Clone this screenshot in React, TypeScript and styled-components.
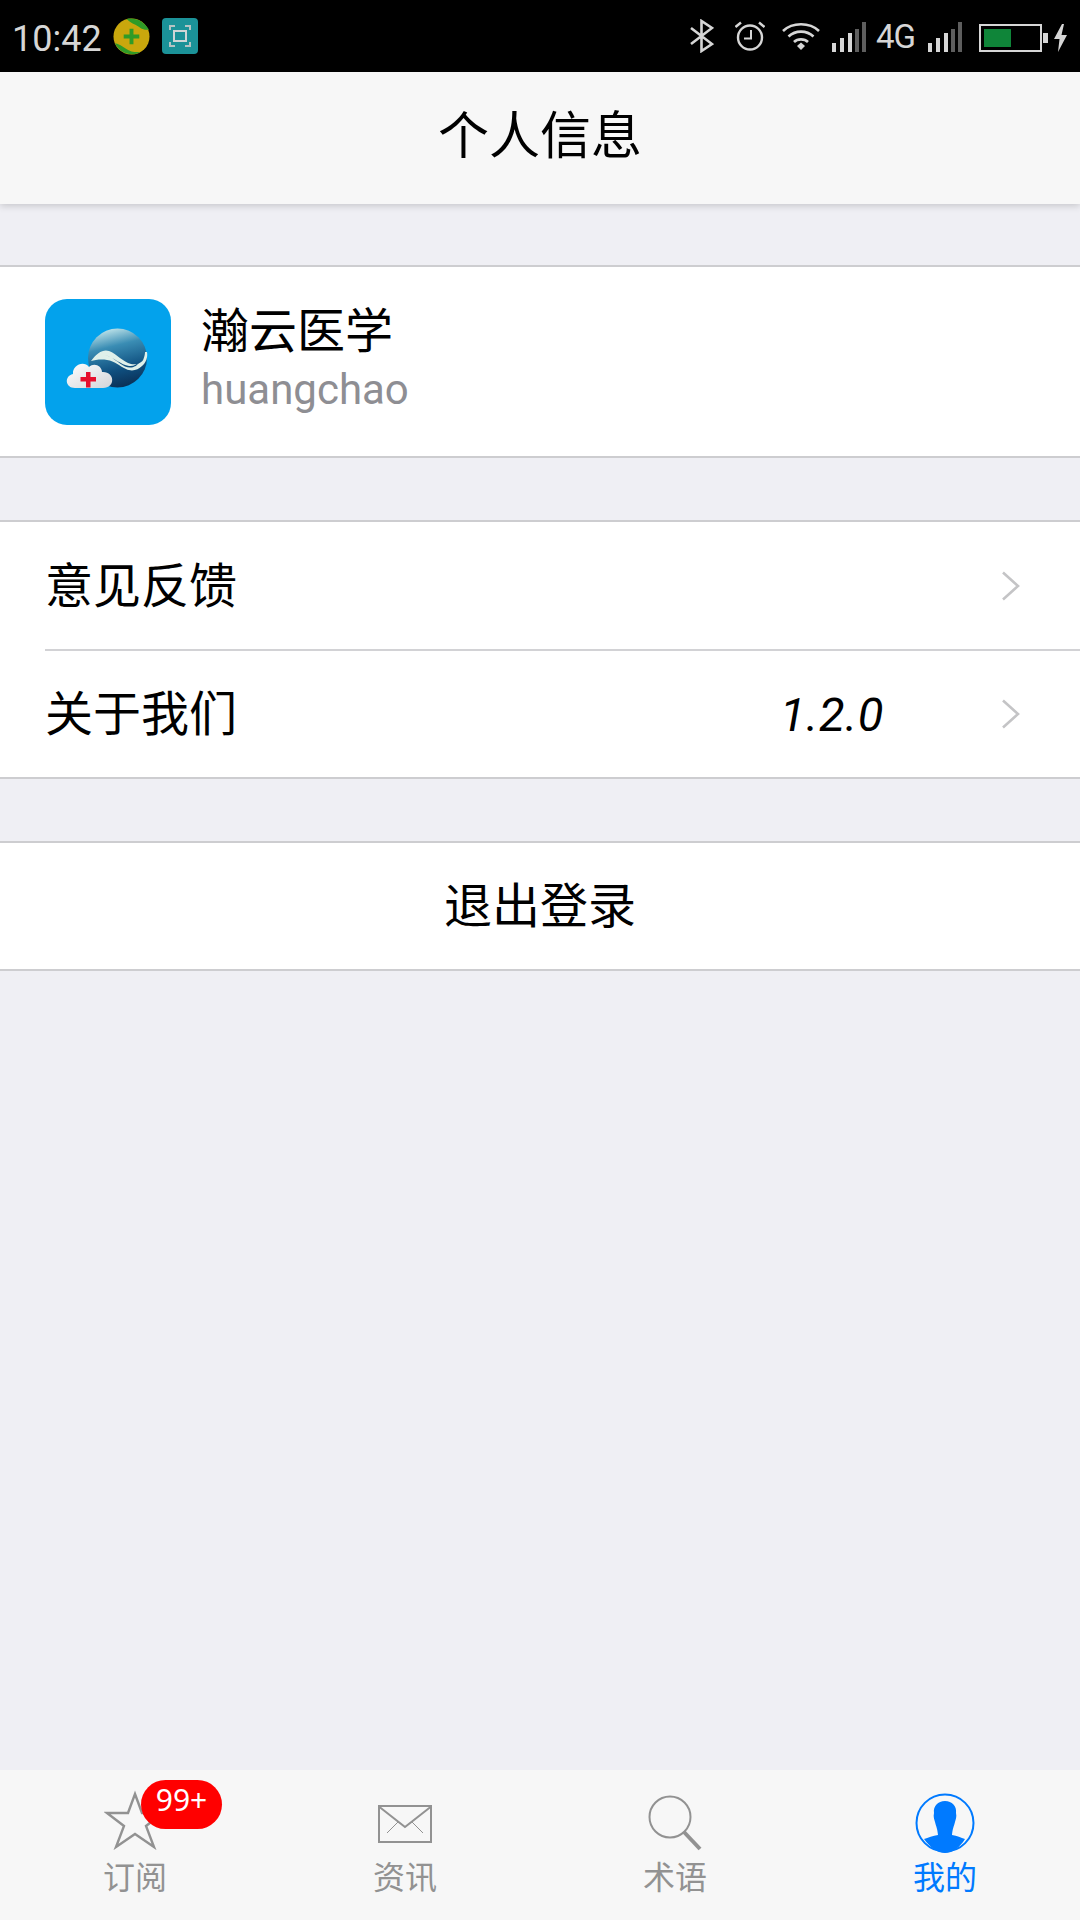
import React from 'react';
import styled, { createGlobalStyle } from 'styled-components';

const GlobalStyle = createGlobalStyle`
    html, body {
        margin: 0;
        padding: 0;
        background: #efeff4;
        font-family: Roboto, "Noto Sans CJK SC", sans-serif;
    }
    * {
        box-sizing: border-box;
    }
`;

const Page = styled.div`
    width: 1080px;
    height: 1920px;
    display: flex;
    flex-direction: column;
    background: #efeff4;
    overflow: hidden;
`;

const StatusBar = styled.div`
    height: 72px;
    flex: none;
    background: #000;
    display: flex;
    align-items: center;
    justify-content: space-between;
    padding: 0 13px 0 12px;
    color: #d6d6d6;
`;

const StatusGroup = styled.div`
    display: flex;
    align-items: center;
`;

const StatusItem = styled.div<{ $gap: number; $down?: number }>`
    display: flex;
    margin-left: ${(p) => p.$gap}px;
    padding-top: ${(p) => p.$down ?? 0}px;
`;

const Clock = styled.span`
    font-size: 36px;
    line-height: 72px;
    margin-right: 11px;
    position: relative;
    top: 3px;
`;

const NetworkLabel = styled.span`
    font-size: 33px;
    line-height: 36px;
    letter-spacing: -1px;
`;

const Header = styled.header`
    height: 132px;
    flex: none;
    background: #f7f7f7;
    display: flex;
    align-items: center;
    justify-content: center;
    padding-bottom: 13px;
    box-shadow: 0 2px 7px rgba(0, 0, 0, 0.17);
    position: relative;
    font-size: 51px;
    color: #000;
`;

const Content = styled.main`
    flex: 1;
    display: flex;
    flex-direction: column;
    padding-top: 61px;
    gap: 62px;
`;

const Section = styled.section`
    background: #fff;
    border-top: 2px solid #cdcdd0;
    border-bottom: 2px solid #cdcdd0;
`;

const Profile = styled.div`
    height: 189px;
    display: flex;
    align-items: center;
    padding-left: 45px;
    gap: 30px;
`;

const Logo = styled.div`
    width: 126px;
    height: 126px;
    border-radius: 22px;
    background: #03a2ec;
    flex: none;
`;

const ProfileText = styled.div`
    display: flex;
    flex-direction: column;
`;

const Name = styled.div`
    font-size: 48px;
    line-height: 60px;
    margin-top: -6px;
    color: #000;
`;

const Account = styled.div`
    font-size: 42px;
    line-height: 50px;
    margin-top: 3px;
    color: #8e8e93;
`;

const Row = styled.div<{ $divider?: boolean }>`
    height: ${(p) => (p.$divider ? 129 : 126)}px;
    margin-left: 45px;
    padding-right: 59px;
    display: flex;
    align-items: center;
    border-bottom: ${(p) => (p.$divider ? '2px solid #d2d2d5' : 'none')};
    font-size: 48px;
    color: #000;
`;

const RowLabel = styled.span`
    flex: 1;
    padding-bottom: 8px;
`;

const RowValue = styled.span`
    font-size: 47px;
    font-style: italic;
    letter-spacing: 0.6px;
    margin-right: 117px;
`;

const Logout = styled.div`
    height: 126px;
    display: flex;
    align-items: center;
    justify-content: center;
    padding-bottom: 9px;
    font-size: 48px;
    color: #000;
`;

const TabBar = styled.nav`
    height: 150px;
    flex: none;
    background: #f7f7f7;
    display: grid;
    grid-template-columns: repeat(4, 270px);
`;

const Tab = styled.div<{ $active?: boolean }>`
    display: flex;
    flex-direction: column;
    align-items: center;
    padding-top: 20px;
    color: ${(p) => (p.$active ? '#007aff' : '#929292')};
    font-size: 32px;
    line-height: 40px;
`;

const TabIcon = styled.div<{ $top: number }>`
    width: 64px;
    height: 60px;
    margin-bottom: 8px;
    padding-top: ${(p) => p.$top}px;
    position: relative;
    display: flex;
    justify-content: center;
`;

const Badge = styled.span`
    position: absolute;
    left: 38px;
    top: -10px;
    width: 81px;
    height: 49px;
    border-radius: 25px;
    background: #ff0000;
    color: #fff;
    font-size: 30px;
    line-height: 40px;
    text-align: center;
    font-family: "Noto Sans", sans-serif;
`;

const Chevron = () => (
    <svg width="20" height="30" viewBox="0 0 20 30" fill="none">
        <path d="M2 1.5 L17 15 L2 28.5" stroke="#c4c4c6" strokeWidth="2.6" />
    </svg>
);

const AppLogo = () => (
    <svg width="126" height="126" viewBox="0 0 126 126">
        <defs>
            <linearGradient id="globe" x1="0.35" y1="0" x2="0.6" y2="1">
                <stop offset="0" stopColor="#bfe4ea" />
                <stop offset="0.3" stopColor="#3a8db4" />
                <stop offset="0.7" stopColor="#0f4f7f" />
                <stop offset="1" stopColor="#0a2f55" />
            </linearGradient>
            <linearGradient id="cloud" x1="0" y1="0" x2="1" y2="1">
                <stop offset="0" stopColor="#ffffff" />
                <stop offset="1" stopColor="#d2d4d8" />
            </linearGradient>
        </defs>
        <circle cx="72.5" cy="59" r="29.5" fill="url(#globe)" />
        <path d="M46 62 C52 54 58 50 64 52 C72 55 78 63 86 65 C92 66 97 64 98.500 60 C99.500 57 100 55 100 53 L102 53 C103 58 101 64 97 67 C93 71 87 73 81 70 C74 67 70 62 62 61 C56 60 50 61 46 62 Z" fill="#dff0ea" />
        <path d="M60 56 C68 58 76 66 84 67 C88 67.500 92 66 95 62 C92 68 86 70 80 67.500 C73 64 68 58 60 56 Z" fill="#0f4f7f" />
        <path d="M30 89 C20 89 19 77 28 75 C27 66 39 61 44 68 C49 63 57 67 57 73 C70 72 71 89 58 89 Z" fill="url(#cloud)" />
        <path d="M41 73 h4.500 v5 h5.500 v4.500 h-5.500 v6 h-4.500 v-6 h-5.500 v-4.500 h5.500 Z" fill="#e60f2d" />
    </svg>
);

const StarIcon = () => (
    <svg width="62" height="60" viewBox="0 0 62 60" fill="none">
        <path d="M31 4 L38 23 L59 23 L42 36 L50 57 L31 44 L12 57 L20 36 L3 23 L24 23 Z" stroke="#929292" strokeWidth="2.4" />
    </svg>
);

const MailIcon = () => (
    <svg width="54" height="38" viewBox="0 0 54 38" fill="none">
        <rect x="1" y="1" width="52" height="36" stroke="#929292" strokeWidth="2" />
        <path d="M1.5 2 L27 22 L52.5 2" stroke="#929292" strokeWidth="2" />
        <path d="M20 17 L9 28 M34 17 L45 28" stroke="#929292" strokeWidth="1" />
    </svg>
);

const SearchIcon = () => (
    <svg width="54" height="56" viewBox="0 0 54 56" fill="none">
        <circle cx="22" cy="22" r="20.500" stroke="#929292" strokeWidth="2" />
        <path d="M36 37 L52 54" stroke="#929292" strokeWidth="4" />
    </svg>
);

const ProfileIcon = () => (
    <svg width="60" height="60" viewBox="0 0 60 60" fill="none">
        <circle cx="30" cy="30" r="28.500" stroke="#007aff" strokeWidth="2" />
        <path d="M30 8 C37 8 42 13 41 20 C42 24 40.500 27 40 29 C39 33 37.500 36 37 42 C42 43 46 44.500 50 46 C45 54 38 60 30 60 C22 60 15 54 9 46 C13 44.500 18 43 23 42 C22.500 36 21 33 20 29 C19.500 27 18 24 19 20 C18 13 23 8 30 8 Z" fill="#007aff" />
    </svg>
);

const GlobeBadge = () => (
    <svg width="37" height="37" viewBox="0 0 38 38">
        <circle cx="19" cy="19" r="18.500" fill="#c9a70d" />
        <path d="M14 1 C22 -1 32 3 37 12 C30 13 27 9 23 7 C19 5 16 3 14 1 Z M2 26 C8 27 11 31 16 33 C20 35 24 35 28 35 C20 40 7 37 2 26 Z" fill="#2f9b27" />
        <path d="M19 11 V27 M11 19 H27" stroke="#2f9b27" strokeWidth="4" />
    </svg>
);

const ScanBadge = () => (
    <svg width="36" height="36" viewBox="0 0 36 36" fill="none">
        <rect width="36" height="36" rx="4" fill="#1b9298" />
        <rect x="12" y="13" width="12" height="10" stroke="#cfd6d6" strokeWidth="2" />
        <path d="M8 12 V8 H13 M23 8 H28 V12 M28 24 V28 H23 M13 28 H8 V24" stroke="#b5c4c4" strokeWidth="2" />
    </svg>
);

const Bluetooth = () => (
    <svg width="24" height="34" viewBox="0 0 24 34" fill="none">
        <path d="M1 9 L22 25 L11.500 32 V2 L22 9 L1 25" stroke="#d6d6d6" strokeWidth="2.600" />
    </svg>
);

const Alarm = () => (
    <svg width="30" height="30" viewBox="0 0 30 30" fill="none">
        <circle cx="15" cy="16.500" r="12" stroke="#d6d6d6" strokeWidth="2.400" />
        <path d="M16 9 V17.500 H9" stroke="#d6d6d6" strokeWidth="2" />
        <path d="M0.500 6 L6 1.500 M29.500 6 L24 1.500" stroke="#d6d6d6" strokeWidth="2.400" />
    </svg>
);

const Wifi = () => (
    <svg width="38" height="28" viewBox="0 0 38 28" fill="none">
        <path d="M1 9 C10.500 0 27.500 0 37 9 M6.500 14.500 C13.500 8 24.500 8 31.500 14.500 M12 20 C15.500 16.500 22.500 16.500 26 20" stroke="#d6d6d6" strokeWidth="2.600" />
        <path d="M15 24 L19 20.500 L23 24 L19 28 Z" fill="#d6d6d6" />
    </svg>
);

const Signal = () => (
    <svg width="34" height="30" viewBox="0 0 34 30" fill="#d6d6d6">
        <rect x="0" y="21" width="4" height="9" />
        <rect x="8" y="16" width="4" height="14" />
        <rect x="16" y="11" width="4" height="19" />
        <rect x="23" y="7" width="4" height="23" fill="#5e5e5e" />
        <rect x="30" y="0" width="4" height="30" fill="#5e5e5e" />
    </svg>
);

const Battery = () => (
    <svg width="88" height="28" viewBox="0 0 88 28" fill="none">
        <rect x="1" y="1" width="61" height="26" stroke="#d6d6d6" strokeWidth="2" />
        <rect x="5" y="5" width="27" height="18" fill="#0f8539" />
        <rect x="64" y="9" width="5" height="10" fill="#d6d6d6" />
        <path d="M83 0 L75 15 H80.500 L79 28 L88 11 H82.500 L85 0 Z" fill="#d6d6d6" />
    </svg>
);

const App: React.FC = () => {
    return (
        <Page>
            <GlobalStyle />
            <StatusBar>
                <StatusGroup>
                    <Clock>10:42</Clock>
                    <GlobeBadge />
                    <StatusItem $gap={12}>
                        <ScanBadge />
                    </StatusItem>
                </StatusGroup>
                <StatusGroup>
                    <Bluetooth />
                    <StatusItem $gap={21}>
                        <Alarm />
                    </StatusItem>
                    <StatusItem $gap={17}>
                        <Wifi />
                    </StatusItem>
                    <StatusItem $gap={12} $down={2}>
                        <Signal />
                    </StatusItem>
                    <StatusItem $gap={10} $down={2}>
                        <NetworkLabel>4G</NetworkLabel>
                    </StatusItem>
                    <StatusItem $gap={13} $down={2}>
                        <Signal />
                    </StatusItem>
                    <StatusItem $gap={17} $down={4}>
                        <Battery />
                    </StatusItem>
                </StatusGroup>
            </StatusBar>
            <Header>个人信息</Header>
            <Content>
                <Section>
                    <Profile>
                        <Logo>
                            <AppLogo />
                        </Logo>
                        <ProfileText>
                            <Name>瀚云医学</Name>
                            <Account>huangchao</Account>
                        </ProfileText>
                    </Profile>
                </Section>
                <Section>
                    <Row $divider>
                        <RowLabel>意见反馈</RowLabel>
                        <Chevron />
                    </Row>
                    <Row>
                        <RowLabel>关于我们</RowLabel>
                        <RowValue>1.2.0</RowValue>
                        <Chevron />
                    </Row>
                </Section>
                <Section>
                    <Logout>退出登录</Logout>
                </Section>
            </Content>
            <TabBar>
                <Tab>
                    <TabIcon $top={0}>
                        <StarIcon />
                        <Badge>99+</Badge>
                    </TabIcon>
                    订阅
                </Tab>
                <Tab>
                    <TabIcon $top={15}>
                        <MailIcon />
                    </TabIcon>
                    资讯
                </Tab>
                <Tab>
                    <TabIcon $top={5}>
                        <SearchIcon />
                    </TabIcon>
                    术语
                </Tab>
                <Tab $active>
                    <TabIcon $top={3}>
                        <ProfileIcon />
                    </TabIcon>
                    我的
                </Tab>
            </TabBar>
        </Page>
    );
};

export default App;
